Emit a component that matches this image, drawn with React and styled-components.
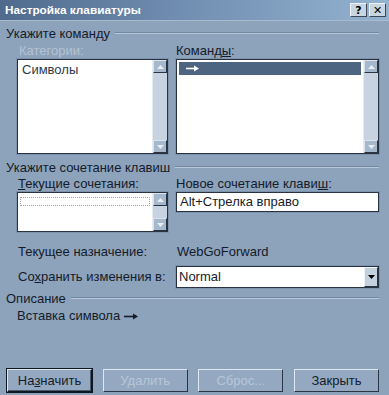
import React from "react";
import styled, { createGlobalStyle } from "styled-components";

const Global = createGlobalStyle`
  html, body { margin: 0; padding: 0; background: #8da2bb; }
  body { font-family: "Liberation Sans", Arial, sans-serif; }
`;

const Dialog = styled.div`
  width: 389px;
  height: 395px;
  background: #8da2bb;
  color: #141c2a;
  font-size: 13px;
  display: flex;
  flex-direction: column;
  overflow: hidden;
`;

const TitleBar = styled.div`
  height: 20px;
  display: flex;
  align-items: center;
  justify-content: space-between;
  padding: 0 3px 0 5px;
  background: linear-gradient(to right, #4f6a8c 0%, #6f8db0 45%, #93b3d0 100%);
  border-bottom: 1px solid #a9bccf;
`;

const Title = styled.span`
  color: #ffffff;
  font-family: "Liberation Sans", Arial, sans-serif;
  font-weight: bold;
  font-size: 11.8px;
  letter-spacing: 0;
`;

const TitleButtons = styled.div`
  display: flex;
  gap: 2px;
`;

const TitleButton = styled.div`
  width: 17px;
  height: 14px;
  background: #c9d5e1;
  border: 1px solid;
  border-color: #eef3f8 #3c4858 #3c4858 #eef3f8;
  display: flex;
  align-items: center;
  justify-content: center;
  font-family: "DejaVu Sans", sans-serif;
  font-weight: bold;
  font-size: 11px;
  color: #000;
  box-sizing: border-box;
`;

const Body = styled.div`
  flex: 1;
  display: flex;
  flex-direction: column;
  padding: 0 10px 3px 6px;
`;

const GroupHeader = styled.div`
  height: 14px;
  margin-top: ${(p) => p.$mt || 0}px;
  display: flex;
  align-items: center;
  gap: 5px;
  white-space: nowrap;
  &::after {
    content: "";
    flex: 1;
    height: 0;
    border-top: 1px solid #7188a3;
    border-bottom: 1px solid #b9c8d8;
  }
`;

const Columns = styled.div`
  display: grid;
  grid-template-columns: 151px 203px;
  column-gap: 8px;
  padding-left: 11px;
  margin-top: ${(p) => p.$mt || 0}px;
  align-items: ${(p) => p.$align || "start"};
`;

const Label = styled.div`
  height: 14px;
  line-height: 14px;
  white-space: nowrap;
  color: ${(p) => (p.$disabled ? "#b3c2d2" : "inherit")};
  padding-left: ${(p) => p.$pl || 0}px;
`;

const U = styled.span`
  text-decoration: underline;
`;

const ListBox = styled.div`
  height: ${(p) => p.$h}px;
  box-sizing: border-box;
  background: #ffffff;
  border: 1px solid #283241;
  box-shadow: 0 0 0 1px #7d93ad;
  display: grid;
  grid-template-columns: 1fr 15px;
`;

const ListItems = styled.div`
  padding: 2px 2px 0 2px;
  display: flex;
  flex-direction: column;
`;

const ListItem = styled.div`
  height: ${(p) => p.$h || 13}px;
  line-height: ${(p) => p.$h || 13}px;
  margin-top: ${(p) => p.$mt || 0}px;
  padding-left: ${(p) => p.$pl || 3}px;
  background: ${(p) => (p.$selected ? "#4e6582" : "transparent")};
  color: ${(p) => (p.$selected ? "#ffffff" : "#2d3848")};
  border: ${(p) => (p.$focus ? "1px dotted #9aa6b4" : "none")};
  box-sizing: border-box;
  display: flex;
  align-items: center;
`;

const ScrollBar = styled.div`
  background: #c7d3e0;
  display: flex;
  flex-direction: column;
  justify-content: space-between;
  border-left: 1px solid #e4ebf2;
`;

const ScrollBtn = styled.div`
  height: 13px;
  background: #a6b8cc;
  border: 1px solid;
  border-color: #dbe4ee #2b3442 #2b3442 #dbe4ee;
  box-sizing: border-box;
  display: flex;
  align-items: center;
  justify-content: center;
`;

const Arrow = ({ down, color = "#e8eef5" }) => (
  <svg width="7" height="4" viewBox="0 0 7 4">
    {down ? (
      <polygon points="0,0 7,0 3.5,4" fill={color} />
    ) : (
      <polygon points="0,4 7,4 3.5,0" fill={color} />
    )}
  </svg>
);

const LongArrow = ({ color = "#fff", w = 13 }) => (
  <svg width={w} height="7" viewBox={`0 0 ${w} 7`}>
    <line x1="0" y1="3.5" x2={w - 2} y2="3.5" stroke={color} strokeWidth="1.6" />
    <polygon points={`${w - 5},0.5 ${w},3.5 ${w - 5},6.5`} fill={color} />
  </svg>
);

const Scroller = () => (
  <ScrollBar>
    <ScrollBtn>
      <Arrow />
    </ScrollBtn>
    <ScrollBtn>
      <Arrow down />
    </ScrollBtn>
  </ScrollBar>
);

const TextBox = styled.div`
  height: 20px;
  box-sizing: border-box;
  background: #ffffff;
  border: 1px solid #283241;
  box-shadow: 0 0 0 1px #7d93ad;
  padding-left: 3px;
  line-height: 18px;
  white-space: nowrap;
`;

const Select = styled.div`
  height: 22px;
  box-sizing: border-box;
  background: #ffffff;
  border: 1px solid #283241;
  box-shadow: 0 0 0 1px #7d93ad;
  display: grid;
  grid-template-columns: 1fr 14px;
`;

const SelectText = styled.div`
  padding-left: 2px;
  line-height: 20px;
`;

const DropBtn = styled.div`
  background: #c3d0de;
  border: 1px solid;
  border-color: #eef3f8 #2b3442 #2b3442 #eef3f8;
  display: flex;
  align-items: center;
  justify-content: center;
`;

const DescText = styled.div`
  height: 14px;
  line-height: 14px;
  margin-top: 4px;
  padding-left: 11px;
  display: flex;
  align-items: center;
  gap: 4px;
`;

const ButtonRow = styled.div`
  margin-top: auto;
  padding-left: 1px;
  display: flex;
  justify-content: space-between;
`;

const Button = styled.div`
  width: 85px;
  height: 23px;
  box-sizing: border-box;
  display: flex;
  align-items: center;
  justify-content: center;
  background: #94a9c1;
  color: ${(p) => (p.$disabled ? "#b7c6d6" : "#141c2a")};
  border: 1px solid;
  border-color: #dfe7ef #2b3442 #2b3442 #dfe7ef;
  outline: ${(p) => (p.$default ? "1px solid #10161f" : "none")};
  ${(p) =>
    p.$default &&
    `border-color: #dfe7ef #10161f #10161f #dfe7ef; box-shadow: inset -1px -1px 0 #4a5a6e;`}
`;

export default function App() {
  return (
    <>
      <Global />
      <Dialog>
        <TitleBar>
          <Title>Настройка клавиатуры</Title>
          <TitleButtons>
            <TitleButton>?</TitleButton>
            <TitleButton>✕</TitleButton>
          </TitleButtons>
        </TitleBar>
        <Body>
          <GroupHeader $mt={5}>Укажите команду</GroupHeader>
          <Columns $mt={4}>
            <Label $disabled $pl={2}>Категории:</Label>
            <Label>
              Команд<U>ы</U>:
            </Label>
          </Columns>
          <Columns $mt={1}>
            <ListBox $h={95}>
              <ListItems>
                <ListItem $pl={2} $mt={1}>Символы</ListItem>
              </ListItems>
              <Scroller />
            </ListBox>
            <ListBox $h={95}>
              <ListItems>
                <ListItem $selected $pl={7}>
                  <LongArrow />
                </ListItem>
              </ListItems>
              <Scroller />
            </ListBox>
          </Columns>
          <GroupHeader $mt={6}>Укажите сочетание клавиш</GroupHeader>
          <Columns $mt={3}>
            <Label $pl={1}>
              <U>Т</U>екущие сочетания:
            </Label>
            <Label>
              Новое сочетание клави<U>ш</U>:
            </Label>
          </Columns>
          <Columns $mt={1}>
            <ListBox $h={40}>
              <ListItems>
                <ListItem $focus $mt={2} $h={9} />
              </ListItems>
              <Scroller />
            </ListBox>
            <TextBox>Alt+Стрелка вправо</TextBox>
          </Columns>
          <Columns $mt={13} $align="center">
            <Label $pl={1}>Текущее назначение:</Label>
            <Label $pl={1}>WebGoForward</Label>
          </Columns>
          <Columns $mt={7} $align="center">
            <Label $pl={1}>
              Со<U>х</U>ранить изменения в:
            </Label>
            <Select>
              <SelectText>Normal</SelectText>
              <DropBtn>
                <Arrow down color="#000" />
              </DropBtn>
            </Select>
          </Columns>
          <GroupHeader $mt={3}>Описание</GroupHeader>
          <DescText>
            Вставка символа <LongArrow color="#141c2a" w={14} />
          </DescText>
          <ButtonRow>
            <Button $default>
              На<U>з</U>начить
            </Button>
            <Button $disabled>Удалить</Button>
            <Button $disabled>Сброс...</Button>
            <Button>Закрыть</Button>
          </ButtonRow>
        </Body>
      </Dialog>
    </>
  );
}
